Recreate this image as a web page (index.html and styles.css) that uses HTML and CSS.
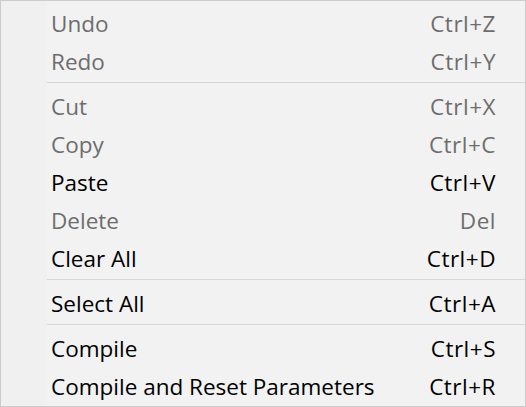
FILE: index.html
```html
<!DOCTYPE html>
<html>
<head>
<meta charset="utf-8">
<link rel="stylesheet" href="styles.css">
</head>
<body>
<div class="menu">
  <div class="item disabled"><span class="label">Undo</span><span class="key">Ctrl+Z</span></div>
  <div class="item disabled"><span class="label">Redo</span><span class="key">Ctrl+Y</span></div>
  <div class="sep"></div>
  <div class="item disabled"><span class="label">Cut</span><span class="key">Ctrl+X</span></div>
  <div class="item disabled"><span class="label">Copy</span><span class="key">Ctrl+C</span></div>
  <div class="item"><span class="label">Paste</span><span class="key">Ctrl+V</span></div>
  <div class="item disabled"><span class="label">Delete</span><span class="key">Del</span></div>
  <div class="item"><span class="label">Clear All</span><span class="key">Ctrl+D</span></div>
  <div class="sep"></div>
  <div class="item"><span class="label">Select All</span><span class="key">Ctrl+A</span></div>
  <div class="sep"></div>
  <div class="item"><span class="label">Compile</span><span class="key">Ctrl+S</span></div>
  <div class="item"><span class="label">Compile and Reset Parameters</span><span class="key">Ctrl+R</span></div>
</div>
</body>
</html>
```
FILE: styles.css
```css
html, body {
  margin: 0;
  padding: 0;
  background: #f2f2f2;
}
.menu {
  width: 524px;
  border: 1px solid #cccccc;
  background: linear-gradient(to right, #f0f0f0 0, #f0f0f0 46px, #f2f2f2 46px);
  padding-top: 4px;
  box-sizing: content-box;
  height: 401px;
  font-family: "Open Sans", "Noto Sans", sans-serif;
  font-size: 22.5px;
  color: #000;
  overflow: hidden;
}
.item {
  display: flex;
  justify-content: space-between;
  align-items: center;
  box-sizing: border-box;
  height: 38px;
  padding-left: 50px;
  padding-right: 29px;
  padding-bottom: 2px;
}
.item.disabled {
  color: #6d6d6d;
}
.key {
  letter-spacing: 0.5px;
}
.sep {
  height: 7px;
  margin-left: 46px;
  display: flex;
  flex-direction: column;
}
.sep::before {
  content: "";
  display: block;
  height: 1px;
  margin-top: 1px;
  background: #d7d7d7;
}
```
